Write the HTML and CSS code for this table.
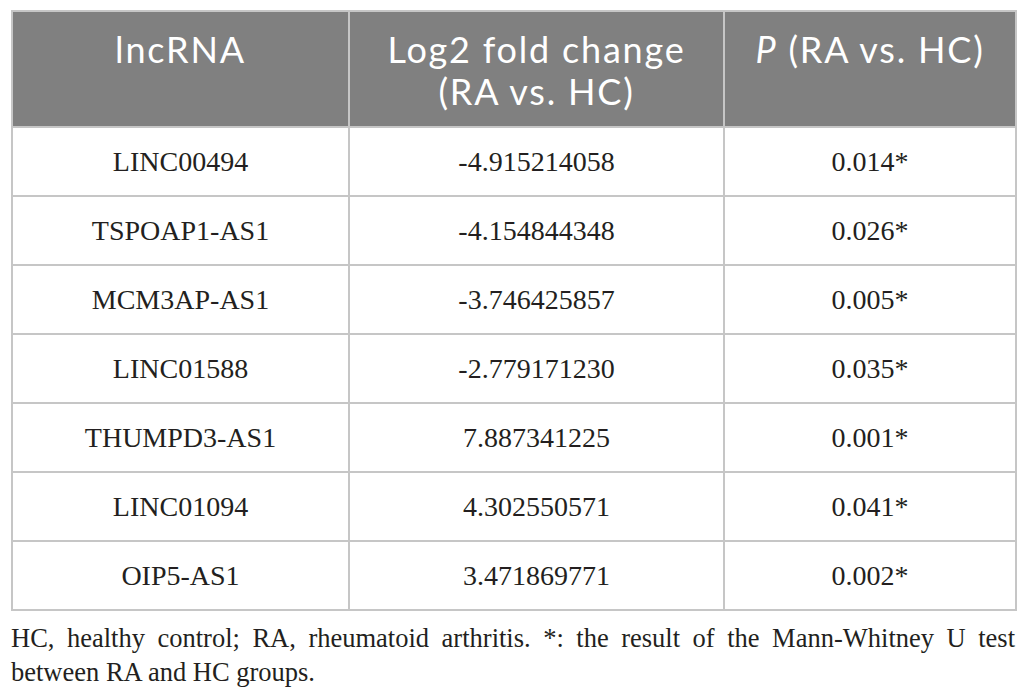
FILE: index.html
```html
<!DOCTYPE html>
<html lang="en">
<head>
    <meta charset="UTF-8">
    <meta name="viewport" content="width=device-width, initial-scale=1.0">
    <title>lncRNA table</title>
    <link rel="stylesheet" href="styles.css">
</head>
<body>

    <!-- Table -->
    <table class="data-table">
        <thead>
            <tr>
                <th class="col-name">lncRNA</th>
                <th class="col-fold">Log2 fold change<br>(RA vs. HC)</th>
                <th class="col-p"><i>P</i> (RA vs. HC)</th>
            </tr>
        </thead>
        <tbody>
            <tr><td>LINC00494</td><td>-4.915214058</td><td>0.014*</td></tr>
            <tr><td>TSPOAP1-AS1</td><td>-4.154844348</td><td>0.026*</td></tr>
            <tr><td>MCM3AP-AS1</td><td>-3.746425857</td><td>0.005*</td></tr>
            <tr><td>LINC01588</td><td>-2.779171230</td><td>0.035*</td></tr>
            <tr><td>THUMPD3-AS1</td><td>7.887341225</td><td>0.001*</td></tr>
            <tr><td>LINC01094</td><td>4.302550571</td><td>0.041*</td></tr>
            <tr><td>OIP5-AS1</td><td>3.471869771</td><td>0.002*</td></tr>
        </tbody>
    </table>

    <!-- Footnote -->
    <p class="footnote">
        <span class="footnote-line">HC, healthy control; RA, rheumatoid arthritis. *: the result of the Mann-Whitney U test</span>
        <span>between RA and HC groups.</span>
    </p>

</body>
</html>
```

FILE: styles.css
```css
/* Reset default styles */
* {
    margin: 0;
    padding: 0;
    box-sizing: border-box;
}

body {
    font-family: "Liberation Serif", "Times New Roman", serif;
    color: #231f20;
    background-color: #fff;
    padding: 10px 11px 0 11px;
}

.data-table {
    width: 1004px;
    border-collapse: collapse;
    table-layout: fixed;
}

.data-table th,
.data-table td {
    border: 2px solid #c6c6c6;
    text-align: center;
}

.data-table th {
    background-color: #808080;
    color: #fff;
    font-family: Lato, "Open Sans", sans-serif;
    font-weight: normal;
    font-size: 36px;
    letter-spacing: 1.8px;
    line-height: 42px;
    height: 116px;
    vertical-align: top;
    padding-top: 16px;
}

.col-name {
    width: 337px;
}

.col-fold {
    width: 375px;
}

.col-p {
    width: 292px;
}

.data-table td {
    font-size: 28px;
    height: 69px;
    vertical-align: middle;
    padding-top: 1px;
}

.footnote {
    font-size: 26.5px;
    line-height: 34px;
    margin-top: 10px;
}

.footnote-line {
    display: block;
    text-align: justify;
    text-align-last: justify;
}
```
